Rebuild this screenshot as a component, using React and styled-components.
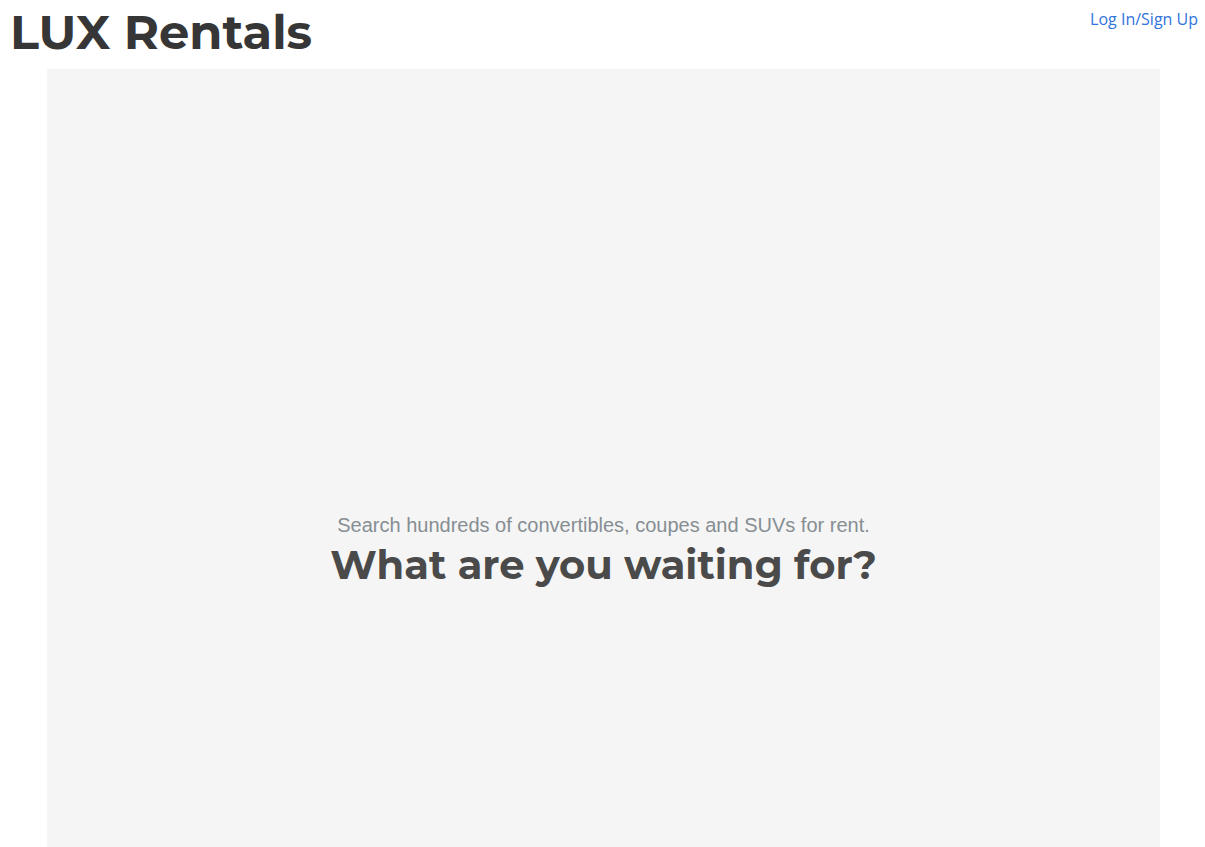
import React from "react";
import styled, { createGlobalStyle } from "styled-components";

const GlobalStyle = createGlobalStyle`
  * { box-sizing: border-box; }
  body { margin: 0; background: #fff; }
`;

const Page = styled.div`
  display: flex;
  flex-direction: column;
  min-height: 100vh;
`;

const Header = styled.header`
  display: flex;
  justify-content: space-between;
  align-items: flex-start;
  padding: 2px 7px 7px 10px;
`;

const Brand = styled.h1`
  margin: 0;
  font: 700 48px/60px Montserrat, Inter, sans-serif;
  color: #363636;
`;

const LoginLink = styled.a`
  padding-top: 6px;
  font: 400 16px/22px "Segoe UI", "Open Sans", sans-serif;
  color: #3273dc;
  text-decoration: none;
`;

const Hero = styled.main`
  flex: 1;
  display: flex;
  flex-direction: column;
  justify-content: flex-end;
  align-items: center;
  margin: 0 45px 0 47px;
  padding-bottom: 257px;
  background: #f5f5f5;
  text-align: center;
`;

const Tagline = styled.p`
  margin: 0;
  font: 400 20px/30px "Liberation Sans", Arial, sans-serif;
  color: #868e93;
`;

const Question = styled.h2`
  margin: 0;
  font: 700 40px/50px Montserrat, Inter, sans-serif;
  color: #4a4a4a;
`;

export default function App() {
  return (
    <Page>
      <GlobalStyle />
      <Header>
        <Brand>LUX Rentals</Brand>
        <LoginLink href="#login">Log In/Sign Up</LoginLink>
      </Header>
      <Hero>
        <Tagline>Search hundreds of convertibles, coupes and SUVs for rent.</Tagline>
        <Question>What are you waiting for?</Question>
      </Hero>
    </Page>
  );
}
